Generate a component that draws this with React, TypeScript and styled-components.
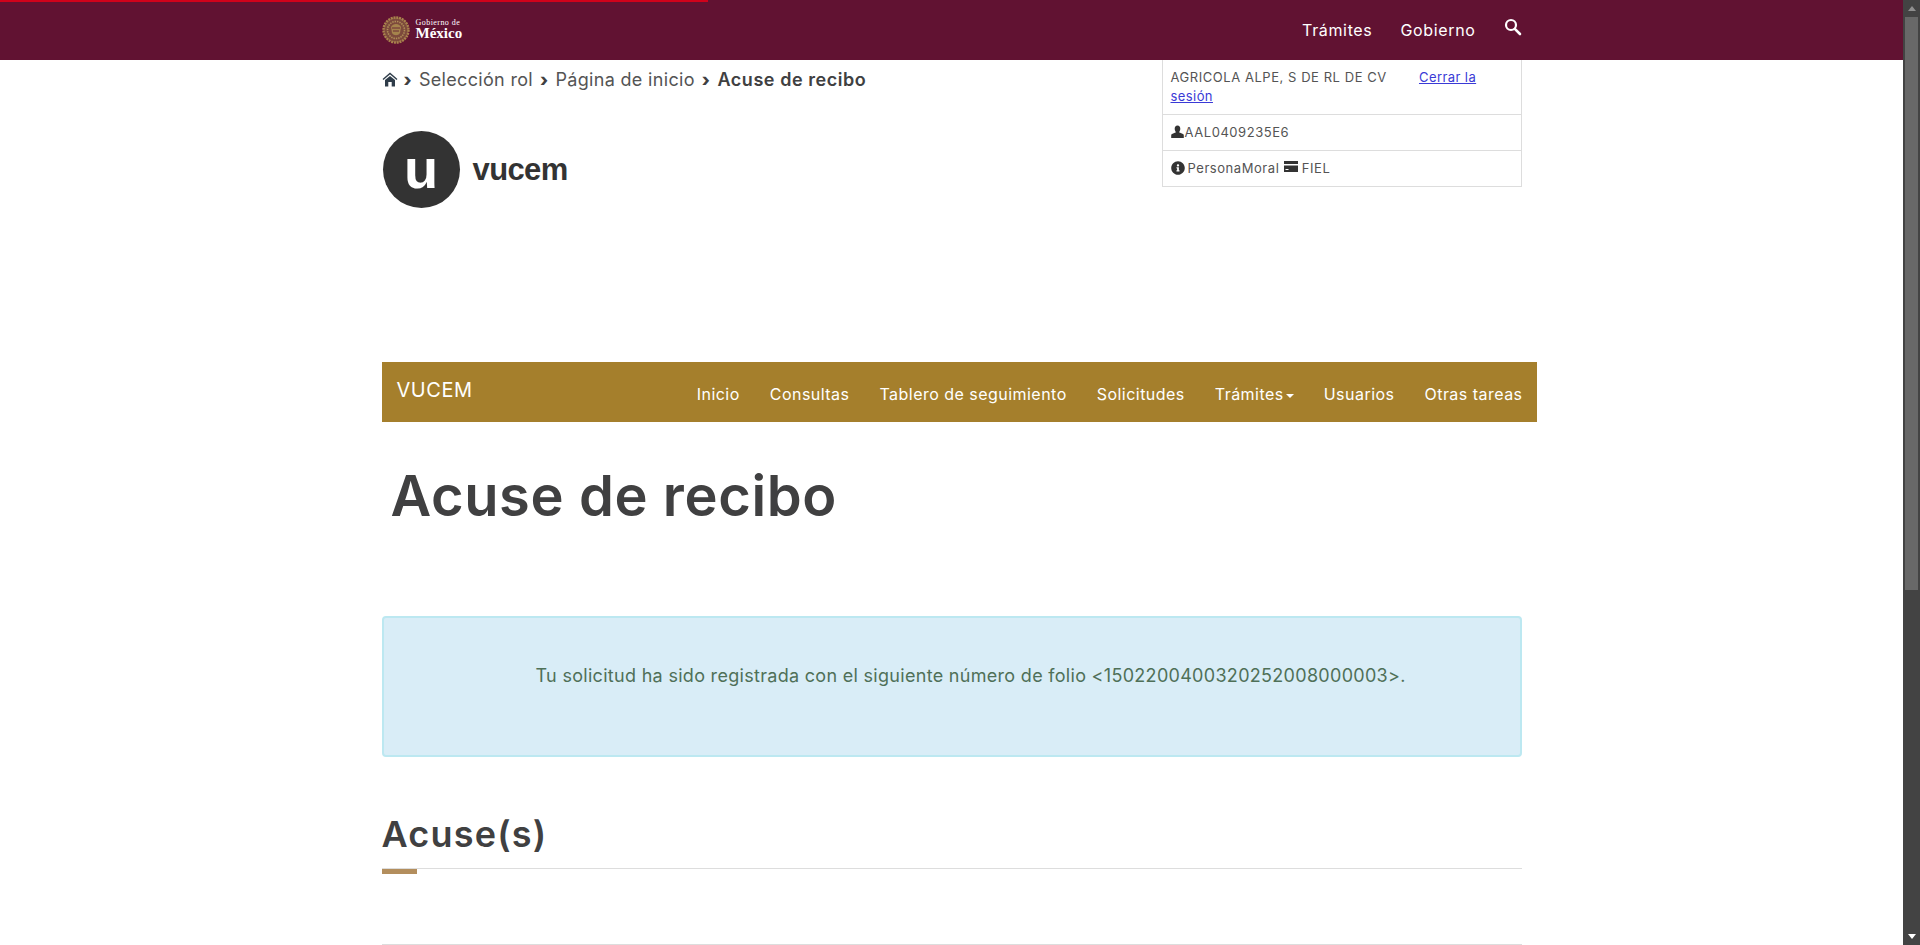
import styled, { createGlobalStyle } from 'styled-components';
import { FaInfoCircle } from 'react-icons/fa';

const GlobalStyle = createGlobalStyle`
    html, body {
        overflow: hidden;
    }
    body {
        margin: 0;
        background: #fff;
        color: #404041;
        font-family: Inter, "Open Sans", sans-serif;
    }
`;

const Page = styled.div`
    position: relative;
    width: 1903px;
    height: 945px;
    overflow: hidden;
`;

const LoadingBar = styled.div`
    position: absolute;
    top: 0;
    left: 0;
    width: 708px;
    height: 2px;
    background: #d0021b;
`;

/* el navegador no pinta su barra en la captura, se dibuja encima */
const ScrollTrack = styled.div`
    position: fixed;
    top: 0;
    right: 0;
    bottom: 0;
    display: flex;
    flex-direction: column;
    align-items: center;
    justify-content: space-between;
    width: 17px;
    background: #434343;
`;

const ScrollThumb = styled.div`
    width: 13px;
    height: 573px;
    background: #686868;
`;

const ScrollTop = styled.div`
    display: flex;
    flex-direction: column;
    align-items: center;
`;

const Arrow = styled.div<{ $up?: boolean }>`
    width: 0;
    height: 0;
    margin: 6px 0;
    border-left: 4px solid transparent;
    border-right: 4px solid transparent;
    border-bottom: ${(p) => (p.$up ? '5px solid #8f8f8f' : '0')};
    border-top: ${(p) => (p.$up ? '0' : '5px solid #fff')};
`;

const Header = styled.header`
    height: 60px;
    background: #611232;
`;

const Container = styled.div`
    width: 1140px;
    margin: 0 auto;
`;

const HeaderInner = styled(Container)`
    display: flex;
    align-items: center;
    justify-content: space-between;
    height: 100%;
`;

const GobLogo = styled.div`
    display: flex;
    align-items: center;
    gap: 6px;
    margin-top: -1px;
`;

const GobText = styled.div`
    display: flex;
    flex-direction: column;
    color: #fff;
    font-family: "Liberation Serif", serif;
`;

const GobSmall = styled.span`
    font-size: 8px;
    line-height: 8px;
    letter-spacing: 0.45px;
`;

const GobBig = styled.span`
    font-size: 15px;
    line-height: 13px;
    font-weight: 700;
`;

const HeaderNav = styled.nav`
    display: flex;
    align-items: center;
    gap: 28px;
    color: #fff;
    font-size: 16px;
    letter-spacing: 0.65px;
`;

const SearchIcon = styled.svg`
    width: 18px;
    height: 18px;
    margin-top: -6px;
`;

const TopRow = styled.div`
    display: flex;
    justify-content: space-between;
    align-items: flex-start;
    height: 302px;
`;

const Breadcrumb = styled.div`
    display: flex;
    align-items: center;
    height: 20px;
    margin-top: 9px;
    font-size: 18px;
    color: #545454;
    letter-spacing: 0.32px;
`;

const Crumb = styled.span<{ $active?: boolean }>`
    margin-right: 7px;
    font-weight: ${(p) => (p.$active ? 600 : 400)};
    color: ${(p) => (p.$active ? '#404041' : '#545454')};
    letter-spacing: ${(p) => (p.$active ? '0.55px' : '0.32px')};

    &::before {
        content: '›';
        margin-right: 7px;
        font-weight: 800;
        color: #404041;
    }
`;

const HomeIcon = styled.svg`
    width: 16px;
    height: 15px;
    margin-right: 6px;
`;

const VucemLogo = styled.div`
    display: flex;
    align-items: center;
    gap: 13px;
    margin: 42px 0 0 1px;
`;

const VucemCircle = styled.div`
    display: flex;
    align-items: center;
    justify-content: center;
    width: 77px;
    height: 77px;
    border-radius: 50%;
    background: #333;
    color: #fff;
    font: 700 56px/1 "Liberation Sans", sans-serif;
    padding-bottom: 2px;
    box-sizing: border-box;
`;

const VucemWord = styled.span`
    font: 700 31px/1 "Liberation Sans", sans-serif;
    color: #333;
    letter-spacing: -0.6px;
`;

const InfoTable = styled.div`
    width: 360px;
    box-sizing: border-box;
    border: 1px solid #ddd;
    border-top: 0;
    font-size: 13px;
    line-height: 19px;
    color: #545454;
    letter-spacing: 0.55px;
`;

const InfoRow = styled.div<{ $height: number }>`
    height: ${(p) => p.$height}px;
    box-sizing: border-box;
    padding: 8px 8px 0;
    border-bottom: 1px solid #ddd;

    &:last-child {
        border-bottom: 0;
    }
`;

const RowIcon = styled.svg`
    width: 13px;
    height: 13px;
    vertical-align: -1px;
    margin-right: 1px;
`;

const InfoIcon = styled(FaInfoCircle)`
    width: 14px;
    height: 14px;
    vertical-align: -2px;
    margin-right: 3px;
    color: #333;
`;

const CardIcon = styled.svg`
    width: 14px;
    height: 13px;
    vertical-align: 0;
`;

const SessionLink = styled.a`
    margin-left: 28px;
    color: #3a3ad6;
    text-decoration: underline;
    letter-spacing: 0.42px;
`;

const GoldNav = styled.nav`
    display: flex;
    justify-content: space-between;
    box-sizing: border-box;
    width: 1155px;
    height: 60px;
    padding: 0 14px 0 15px;
    background: #a57f2c;
    color: #fff;
`;

const Brand = styled.span`
    margin-top: 16px;
    font-size: 20px;
    line-height: 24px;
    letter-spacing: 0.55px;
`;

const NavList = styled.div`
    display: flex;
    gap: 30px;
    margin-top: 21px;
    font-size: 16px;
    line-height: 22px;
    letter-spacing: 0.47px;
`;

const Caret = styled.span`
    display: inline-block;
    margin-left: 2px;
    vertical-align: 2px;
    border-top: 4px solid #fff;
    border-left: 4px solid transparent;
    border-right: 4px solid transparent;
`;

const Title = styled.h1`
    margin: 43px 0 0 9px;
    font-size: 56px;
    line-height: 62px;
    font-weight: 600;
    color: #404041;
    letter-spacing: 0.6px;
`;

const Alert = styled.div`
    box-sizing: border-box;
    height: 141px;
    margin-top: 89px;
    padding: 46px 15px 0 152px;
    background: #d9edf7;
    border: 2px solid #bce8f1;
    border-radius: 4px;
    color: #4f7058;
    font-size: 18px;
    line-height: 24px;
    letter-spacing: 0.3px;
`;

const SectionTitle = styled.h2`
    margin: 55px 0 0;
    font-size: 36px;
    line-height: 44px;
    font-weight: 600;
    color: #404041;
    letter-spacing: 1.2px;
`;

const Rule = styled.div`
    position: relative;
    height: 1px;
    margin-top: 12px;
    background: #ddd;

    &::after {
        content: '';
        position: absolute;
        left: 0;
        top: 1px;
        width: 35px;
        height: 5px;
        background: #b38e5d;
    }
`;

const BottomRule = styled.div`
    height: 1px;
    margin-top: 75px;
    background: #ddd;
`;

function Shield() {
    return (
        <svg width="28" height="30" viewBox="0 0 28 30">
            <circle cx="14" cy="15" r="12.5" fill="#7d4a3c" stroke="#a9834d" strokeWidth="2.4" strokeDasharray="2 0.8" />
            <circle cx="14" cy="15" r="8.5" fill="none" stroke="#b08f58" strokeWidth="1.6" strokeDasharray="1.4 1" />
            <path d="M9 12 C11 8 17 8 19 12 L18 18 C16 21 12 21 10 18 Z" fill="#a5834c" />
            <path d="M10 13 L18 13 M11 16 L17 16" stroke="#6b2a34" strokeWidth="1" />
        </svg>
    );
}

export default function App() {
    return (
        <Page>
            <GlobalStyle />
            <LoadingBar />
            <Header>
                <HeaderInner>
                    <GobLogo>
                        <Shield />
                        <GobText>
                            <GobSmall>Gobierno de</GobSmall>
                            <GobBig>México</GobBig>
                        </GobText>
                    </GobLogo>
                    <HeaderNav>
                        <span>Trámites</span>
                        <span>Gobierno</span>
                        <SearchIcon viewBox="0 0 18 18" fill="none" stroke="#fff">
                            <circle cx="7" cy="7" r="5" strokeWidth="2.2" />
                            <path d="M10.8 10.8 L16 16" strokeWidth="2.6" strokeLinecap="round" />
                        </SearchIcon>
                    </HeaderNav>
                </HeaderInner>
            </Header>
            <Container>
                <TopRow>
                    <div>
                        <Breadcrumb>
                            <HomeIcon viewBox="0 0 16 15">
                                <path d="M1 7.5 L8 1.5 L15 7.5" fill="none" stroke="#2f3d4a" strokeWidth="1.4" />
                                <path d="M3 8 L8 4 L13 8 V14.5 H9.7 V10 H6.3 V14.5 H3 Z" fill="#2f3d4a" />
                            </HomeIcon>
                            <Crumb>Selección rol</Crumb>
                            <Crumb>Página de inicio</Crumb>
                            <Crumb $active>Acuse de recibo</Crumb>
                        </Breadcrumb>
                        <VucemLogo>
                            <VucemCircle>u</VucemCircle>
                            <VucemWord>vucem</VucemWord>
                        </VucemLogo>
                    </div>
                    <InfoTable>
                        <InfoRow $height={55}>
                            AGRICOLA ALPE, S DE RL DE CV <SessionLink href="#">Cerrar la sesión</SessionLink>
                        </InfoRow>
                        <InfoRow $height={36}>
                            <RowIcon viewBox="0 0 13 13">
                                <path d="M6.5 0.5 C8.4 0.5 9.3 2 9.3 3.8 C9.3 5.4 8.5 6.7 8 7.2 L12 9 C12.6 9.3 12.8 9.8 12.8 10.4 V13 H0.2 V10.4 C0.2 9.8 0.4 9.3 1 9 L5 7.2 C4.5 6.7 3.7 5.4 3.7 3.8 C3.7 2 4.6 0.5 6.5 0.5 Z" fill="#333" />
                            </RowIcon>
                            AAL0409235E6
                        </InfoRow>
                        <InfoRow $height={35}>
                            <InfoIcon />
                            PersonaMoral{' '}
                            <CardIcon viewBox="0 0 14 13">
                                <path d="M0 1 H14 V12 H0 Z" fill="#333" />
                                <path d="M0 4 H14 V5.5 H0 Z M1.5 9 H4.5 V10 H1.5 Z" fill="#fff" />
                            </CardIcon>{' '}
                            FIEL
                        </InfoRow>
                    </InfoTable>
                </TopRow>
                <GoldNav>
                    <Brand>VUCEM</Brand>
                    <NavList>
                        <span>Inicio</span>
                        <span>Consultas</span>
                        <span>Tablero de seguimiento</span>
                        <span>Solicitudes</span>
                        <span>
                            Trámites
                            <Caret />
                        </span>
                        <span>Usuarios</span>
                        <span>Otras tareas</span>
                    </NavList>
                </GoldNav>
                <Title>Acuse de recibo</Title>
                <Alert>Tu solicitud ha sido registrada con el siguiente número de folio &lt;1502200400320252008000003&gt;.</Alert>
                <SectionTitle>Acuse(s)</SectionTitle>
                <Rule />
                <BottomRule />
            </Container>
            <ScrollTrack>
                <ScrollTop>
                    <Arrow $up />
                    <ScrollThumb />
                </ScrollTop>
                <Arrow />
            </ScrollTrack>
        </Page>
    );
}
